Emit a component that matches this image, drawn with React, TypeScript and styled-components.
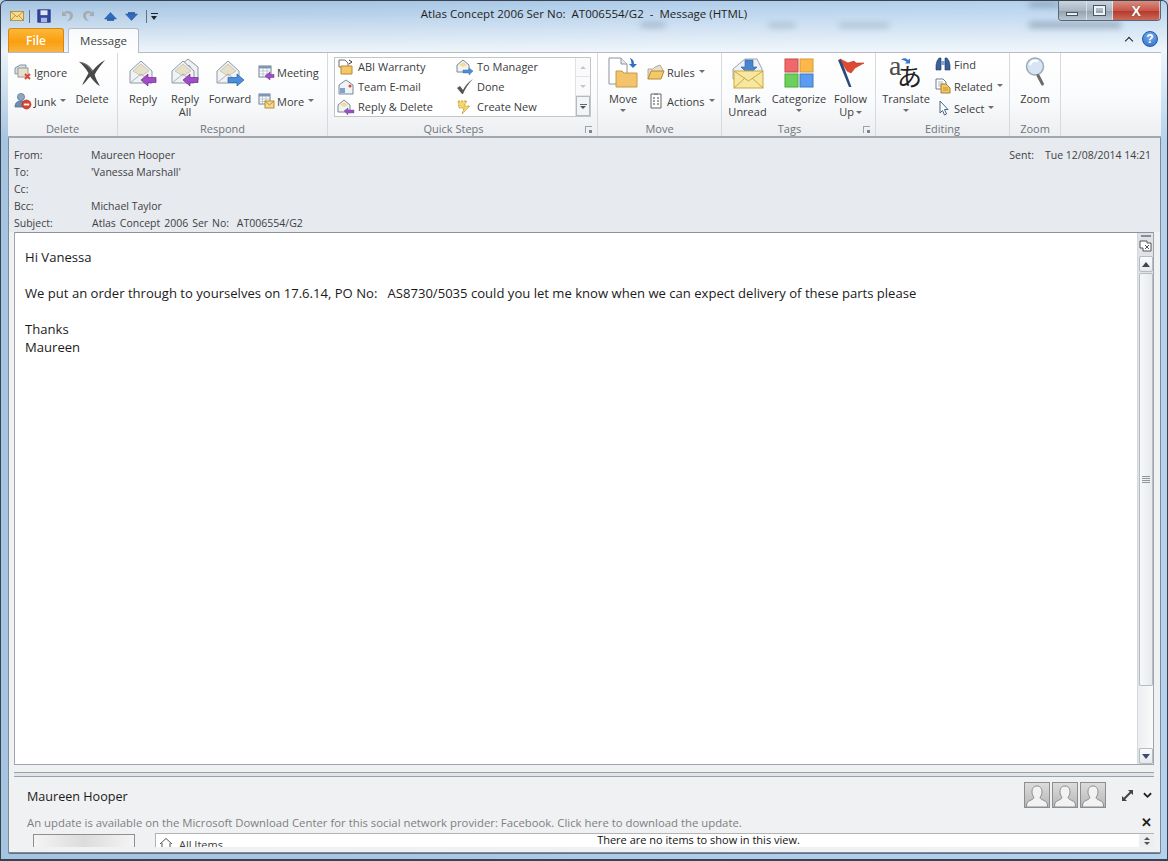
import React from 'react';
import styled, { createGlobalStyle } from 'styled-components';

const GlobalStyle = createGlobalStyle`
  html, body {
    margin: 0;
    padding: 0;
    overflow: hidden;
    background: #b9d1ea;
  }
  * { box-sizing: border-box; }
`;

const FONT = '"Open Sans", "Noto Sans", "Liberation Sans", sans-serif';

/* ---------- icons ---------- */

const EnvelopeBase = () => (
  <>
    <path d="M2 13 L13 3 L24 13 V25 H2 Z" fill="#f0f2f4" stroke="#8c98a6" />
    <path d="M5 13 L13 6 L21 13 L13 18 Z" fill="#e6e0c8" stroke="#b8b49c" strokeWidth="0.6" />
    <path d="M2 25 L13 16 L24 25" fill="none" stroke="#a8b2bc" />
  </>
);

const ReplyIcon = ({ all = false }: { all?: boolean }) => (
  <svg width="30" height="30" viewBox="0 0 30 30">
    {all && <path d="M12 6 L18 1 L28 9 V22 H20 V8 Z" fill="#eef0f3" stroke="#8c98a6" />}
    <EnvelopeBase />
    <path d="M13 22 L20 16 V19.5 H28 V24.5 H20 V28 Z" fill="#a24cc8" stroke="#6d2a91" strokeWidth="0.7" />
  </svg>
);

const ForwardIcon = () => (
  <svg width="30" height="30" viewBox="0 0 30 30">
    <EnvelopeBase />
    <path d="M29 22 L22 16 V19.5 H13 V24.5 H22 V28 Z" fill="#4a8ee0" stroke="#25609f" strokeWidth="0.7" />
  </svg>
);

const DeleteIcon = () => (
  <svg width="30" height="28" viewBox="0 0 32 32">
    <path d="M1 3 C9 4 14 8 17 13 C20 9 25 4 31 1 C26 7 21 13 19 18 C20 22 23 27 25 31 C20 28 16 23 14 20 C11 23 8 27 5 30 C6 26 10 20 12 16 C9 11 5 6 1 3 Z" fill="#484848" />
    <path d="M3 3.5 C9 5 14 10 16 14" fill="none" stroke="#9a9a9a" strokeWidth="0.8" />
  </svg>
);

const IgnoreIcon = () => (
  <svg width="18" height="16" viewBox="0 0 18 16">
    <path d="M1 4 L6 1 L12 1 L12 9 L1 10 Z" fill="#d5dde6" stroke="#8395a8" />
    <rect x="4" y="4" width="10" height="9" fill="#e8e0cf" stroke="#9a9a8a" />
    <path d="M11 10 L16 15 M16 10 L11 15" stroke="#d84a3a" strokeWidth="2" />
  </svg>
);

const JunkIcon = () => (
  <svg width="18" height="18" viewBox="0 0 18 18">
    <circle cx="7" cy="5" r="3.6" fill="#8ca6c4" stroke="#5b7390" strokeWidth="0.7" />
    <path d="M1 15 C1 10 4 9 7 9 C10 9 12 10 12 15 Z" fill="#6f8cb0" stroke="#4d6480" strokeWidth="0.7" />
    <circle cx="12.5" cy="12.5" r="4.5" fill="#d9442e" stroke="#a32e1c" strokeWidth="0.6" />
    <rect x="9.8" y="11.6" width="5.4" height="1.8" fill="#fff" />
  </svg>
);

const MeetingIcon = () => (
  <svg width="17" height="16" viewBox="0 0 17 16">
    <rect x="1" y="2" width="12" height="11" fill="#fff" stroke="#6f7f92" />
    <rect x="1" y="2" width="12" height="2.5" fill="#7f95b5" />
    <path d="M1 7 H13 M1 10 H13 M5 4 V13 M9 4 V13" stroke="#a9b5c4" strokeWidth="0.7" />
    <path d="M7 12 L12 8 V10.5 H16 V13.5 H12 V16 Z" fill="#a24cc8" stroke="#6d2a91" strokeWidth="0.5" />
  </svg>
);

const MoreIcon = () => (
  <svg width="17" height="16" viewBox="0 0 17 16">
    <rect x="1" y="1" width="11" height="10" fill="#fff" stroke="#6f7f92" />
    <rect x="1" y="1" width="11" height="2.5" fill="#7f95b5" />
    <path d="M1 6 H12 M1 8.5 H12 M4.5 3 V11 M8 3 V11" stroke="#a9b5c4" strokeWidth="0.7" />
    <rect x="7" y="8" width="9" height="7" fill="#f6d98a" stroke="#b48f3a" />
    <path d="M7 8 L11.5 12 L16 8" fill="none" stroke="#b48f3a" />
  </svg>
);

const AbiIcon = () => (
  <svg width="18" height="16" viewBox="0 0 18 16">
    <path d="M2 1 H8 L11 4 V8 H2 Z" fill="#fff" stroke="#6c6c6c" />
    <path d="M4 7 H15 V15 H4 Z" fill="#f4c868" stroke="#b68a30" />
    <path d="M12 1 L15 3 L12 5" fill="none" stroke="#333" />
  </svg>
);

const TeamIcon = () => (
  <svg width="18" height="16" viewBox="0 0 18 16">
    <path d="M2 6 L9 1 L16 6 V15 H2 Z" fill="#f0f2f4" stroke="#75889c" />
    <rect x="3" y="9" width="5" height="5" fill="#7fa3cc" />
    <circle cx="13" cy="7" r="1.5" fill="#c94a3a" />
  </svg>
);

const SmallMail = ({ arrow }: { arrow: string }) => (
  <svg width="18" height="16" viewBox="0 0 18 16">
    <path d="M1 6 L7 1 L13 6 V13 H1 Z" fill="#f0f2f4" stroke="#75889c" />
    <path d="M3 6 L7 3 L11 6 L7 8 Z" fill="#f2dc9a" />
    <path d={`M${arrow === '#a24cc8' ? '7 12 L11 9 V11 H17 V14 H11 V16 Z' : '17 12 L13 9 V11 H7 V14 H13 V16 Z'}`} fill={arrow} stroke="#44557a" strokeWidth="0.4" />
  </svg>
);

const CheckIcon = () => (
  <svg width="18" height="16" viewBox="0 0 18 16">
    <path d="M1 9 L4 7 L7 11 C9 7 12 3 17 0 C12 5 9 10 7 15 H6 Z" fill="#555" />
  </svg>
);

const BoltIcon = () => (
  <svg width="18" height="16" viewBox="0 0 18 16">
    <path d="M2 2 H11 L8 7 H14 L6 15 L8 9 H3 Z" fill="#f3d66c" stroke="#b8962c" strokeWidth="0.8" strokeDasharray="2 1" />
  </svg>
);

const MoveIcon = () => (
  <svg width="32" height="32" viewBox="0 0 32 32">
    <path d="M2 1 H14 L20 7 V27 H2 Z" fill="#fff" stroke="#8a94a0" />
    <path d="M14 1 V7 H20" fill="#e6eaee" stroke="#8a94a0" />
    <path d="M9 14 H15 L17 16 H30 V30 H9 Z" fill="#f3c46c" stroke="#c49a48" />
    <path d="M23 1 C26 2 27 4 27 7 H30 L26 11 L22 7 H24.5 C24.5 5 24 3 23 1 Z" fill="#2f6fbe" />
  </svg>
);

const RulesIcon = () => (
  <svg width="18" height="16" viewBox="0 0 18 16">
    <path d="M1 5 H6 L8 3 L13 1 L16 6 V8 H5 L1 15 Z" fill="#e6e0d2" stroke="#8a7c5a" strokeWidth="0.6" />
    <path d="M1 15 L4 7 H17 L14 15 Z" fill="#f3c868" stroke="#b68a30" />
  </svg>
);

const ActionsIcon = () => (
  <svg width="16" height="16" viewBox="0 0 16 16">
    <path d="M3 1 H13 V15 H3 Z" fill="#fff" stroke="#666" />
    <path d="M5 5 H7 M9 5 H11 M5 8 H7 M9 8 H11 M5 11 H7 M9 11 H11" stroke="#444" />
    <path d="M6 0.5 H10 V2 H6 Z" fill="#888" />
  </svg>
);

const MarkUnreadIcon = () => (
  <svg width="34" height="32" viewBox="0 0 34 32">
    <path d="M2 12 L14 2 L26 2 L31 12 V22 H2 Z" fill="#eef0f4" stroke="#99a4b2" />
    <path d="M14 3 H22 V10 H26 L18 18 L10 10 H14 Z" fill="#4a85d0" stroke="#2a5e9f" strokeWidth="0.6" />
    <rect x="3" y="14" width="29" height="17" fill="#f8e7a0" stroke="#c9a840" />
    <path d="M3 14 L17.5 24 L32 14 M3 31 L14 21 M32 31 L21 21" fill="none" stroke="#c9a840" />
  </svg>
);

const CategorizeIcon = () => (
  <svg width="30" height="30" viewBox="0 0 30 30">
    <rect x="1" y="1" width="13" height="13" fill="#f0696a" stroke="#c8494a" />
    <rect x="16" y="1" width="13" height="13" fill="#fcb84a" stroke="#d99a2f" />
    <rect x="1" y="16" width="13" height="13" fill="#6cd05c" stroke="#4aa83c" />
    <rect x="16" y="16" width="13" height="13" fill="#5a9cf0" stroke="#3c78c8" />
  </svg>
);

const FlagIcon = () => (
  <svg width="30" height="32" viewBox="0 0 30 32">
    <path d="M2 3 L13 30 H15.5 L5 2 Z" fill="#2a4a7c" />
    <path d="M4 2 L12 6 L18 4 L20 6 L28 6 L19 11 L15 16 L11 14 Z" fill="#e0492f" stroke="#b23220" strokeWidth="0.6" />
  </svg>
);

const TranslateIcon = () => (
  <svg width="34" height="32" viewBox="0 0 34 32" overflow="visible">
    <text x="0" y="18" fontFamily='"Liberation Serif", serif' fontSize="28" fill="#4b4b4b">a</text>
    <text x="8" y="29" fontFamily='"Noto Sans CJK JP", sans-serif' fontSize="25" fill="#222">あ</text>
    <path d="M12 3 C14 0.5 17 0.5 19 3 L21 1.5 V6.5 H16 L17.5 5 C16 3.5 14.5 3 12 3 Z" fill="#3a78c8" />
  </svg>
);

const FindIcon = () => (
  <svg width="16" height="14" viewBox="0 0 16 14">
    <path d="M2 4 L4 1 H6 V9 L6 13 H1 V8 Z" fill="#3b5f96" stroke="#1e3a66" strokeWidth="0.6" />
    <path d="M14 4 L12 1 H10 V13 H15 V8 Z" fill="#3b5f96" stroke="#1e3a66" strokeWidth="0.6" />
    <rect x="6" y="4" width="4" height="4" fill="#86a3cc" />
  </svg>
);

const RelatedIcon = () => (
  <svg width="16" height="16" viewBox="0 0 16 16">
    <path d="M1 1 H8 L11 4 V11 H1 Z" fill="#fff" stroke="#6f7f92" />
    <path d="M3 4 H8 M3 6 H9 M3 8 H9" stroke="#8a9ab0" strokeWidth="0.7" />
    <path d="M6 6 H11 L15 10 V15 H6 Z" fill="#f3c868" stroke="#a57f2a" />
    <path d="M8 10 H13 M8 12 H13" stroke="#a57f2a" strokeWidth="0.7" />
  </svg>
);

const SelectIcon = () => (
  <svg width="16" height="16" viewBox="0 0 16 16">
    <path d="M5 1 V13 L7.5 10.5 L9.5 15 L11.5 14 L9.5 9.5 H13 Z" fill="#fff" stroke="#4a6384" />
  </svg>
);

const ZoomIcon = () => (
  <svg width="26" height="32" viewBox="0 0 26 32">
    <circle cx="13" cy="9.5" r="8.5" fill="#d7e4f4" stroke="#9aa8b8" strokeWidth="1.5" />
    <path d="M8 8 C9 4.5 12 3 16 4" fill="none" stroke="#fff" strokeWidth="2" />
    <path d="M16 18.5 L20.5 27" stroke="#6b6b6b" strokeWidth="3" strokeLinecap="round" />
  </svg>
);

const PersonIcon = () => (
  <svg width="24" height="24" viewBox="0 0 24 24">
    <path d="M12 3 C8.6 3 7 5.6 7 9 C7 11.5 8 13 9 14.2 C9 16 6 17 3.4 18.4 C2 19.2 1.5 21 1.5 24 H22.5 C22.5 21 22 19.2 20.6 18.4 C18 17 15 16 15 14.2 C16 13 17 11.5 17 9 C17 5.6 15.4 3 12 3 Z" fill="#f2f2f2" stroke="#8d8d8d" />
  </svg>
);

const HouseIcon = () => (
  <svg width="14" height="14" viewBox="0 0 14 14">
    <path d="M1 7 L7 1.5 L13 7 M3 6 V13 H11 V6" fill="none" stroke="#555" />
  </svg>
);

const MailGlyph = () => (
  <svg width="14" height="10" viewBox="0 0 16 12" preserveAspectRatio="none">
    <rect x="0.5" y="0.5" width="15" height="11" fill="#f8dc8a" stroke="#a98c3c" />
    <path d="M0.5 0.5 L8 7 L15.5 0.5 M0.5 11.5 L6 5.5 M15.5 11.5 L10 5.5" fill="none" stroke="#a98c3c" />
  </svg>
);

const SaveGlyph = () => (
  <svg width="14" height="14" viewBox="0 0 16 16">
    <rect x="1" y="1" width="14" height="14" fill="#3346a6" stroke="#1a2a72" />
    <rect x="4" y="1.5" width="8" height="5.5" fill="#dfe6f4" />
    <rect x="4.5" y="10" width="7" height="5" fill="#aab6dc" />
  </svg>
);

const UndoGlyph = ({ flip = false }: { flip?: boolean }) => (
  <svg width="14" height="14" viewBox="0 0 14 14" style={flip ? { transform: 'scaleX(-1)' } : undefined}>
    <path d="M2 2 V7 H7 L5 5 C7 3.5 10 4.5 10 7 C10 9 9 10.5 7 12 C11 12 13 9 13 6.5 C13 2.5 8 0.5 4 3.5 Z" fill="#a7acb2" />
  </svg>
);

const ArrowGlyph = ({ down = false }: { down?: boolean }) => (
  <svg width="13" height="9" viewBox="0 0 13 9">
    <path d={down ? 'M0.5 2 H12.5 L6.5 8.5 Z' : 'M0.5 7 H12.5 L6.5 0.5 Z'} fill="#2e6cc4" stroke="#1c4a8e" strokeWidth="0.5" />
    <path d={down ? 'M3 1 H10' : 'M3 8 H10'} stroke="#1c4a8e" strokeWidth="1.4" />
  </svg>
);

/* ---------- window frame ---------- */

const Window = styled.div`
  position: relative;
  width: 1168px;
  height: 861px;
  overflow: hidden;
  display: flex;
  flex-direction: column;
  font-family: ${FONT};
  color: #3b3b3b;
  border: 1px solid #39424d;
  border-bottom-width: 2px;
  border-radius: 6px 6px 0 0;
  background:
    linear-gradient(180deg, rgba(255,255,255,0) 0, rgba(255,255,255,0.8) 50px, rgba(255,255,255,0) 140px),
    linear-gradient(90deg, #a4c4e2 0, #a6c6e4 30%, #afcdea 60%, #b4d2ee 100%);
`;

const GlassSmudge = styled.span<{ $x: number; $y: number; $w: number; $h: number }>`
  position: absolute;
  left: ${p => p.$x}px;
  top: ${p => p.$y}px;
  width: ${p => p.$w}px;
  height: ${p => p.$h}px;
  background: rgba(70, 90, 115, 0.4);
  filter: blur(3px);
`;

const TitleBar = styled.div`
  position: relative;
  height: 26px;
  padding: 5px 0 0 9px;
  display: flex;
  align-items: flex-start;
  flex: none;
`;

const QuickAccess = styled.div`
  display: flex;
  align-items: center;
  height: 20px;
`;

const QuickSlot = styled.span<{ $after: number }>`
  display: flex;
  align-items: center;
  margin-right: ${p => p.$after}px;
`;

const QuickSeparator = styled.div`
  width: 1px;
  height: 13px;
  background: #5e7388;
`;

const QuickMenu = styled.span`
  width: 7px;
  height: 7px;
  border-top: 1px solid #222;
  position: relative;
  &::after {
    content: '';
    position: absolute;
    left: 0;
    top: 2px;
    border-left: 3.5px solid transparent;
    border-right: 3.5px solid transparent;
    border-top: 4px solid #222;
  }
`;

const Title = styled.div`
  position: absolute;
  left: 0;
  right: 0;
  top: 5px;
  text-align: center;
  font-size: 11.5px;
  line-height: 16px;
  color: #1e1e1e;
  white-space: pre;
`;

const CaptionButtons = styled.div`
  position: absolute;
  top: 0;
  right: 6px;
  height: 20px;
  width: 103px;
  display: flex;
  border: 1px solid #5b6671;
  border-top: none;
  border-radius: 0 0 4px 4px;
  overflow: hidden;
`;

const CaptionButton = styled.div<{ $close?: boolean; $width: number }>`
  width: ${p => p.$width}px;
  display: flex;
  align-items: center;
  justify-content: center;
  border-right: 1px solid rgba(255, 255, 255, 0.5);
  background: ${p =>
    p.$close
      ? 'linear-gradient(180deg, #d98d80 0, #c9564a 50%, #b63b2c 55%, #c96a5c 100%)'
      : 'linear-gradient(180deg, #c8d4e0 0, #a9b6c3 50%, #95a3b1 55%, #b9c6d2 100%)'};
`;

const MinimizeGlyph = styled.span`
  display: block;
  width: 12px;
  height: 4px;
  margin-top: 6px;
  background: #e8edf2;
  border: 1px solid #4a5560;
`;

const MaximizeGlyph = styled.span`
  display: block;
  width: 11px;
  height: 9px;
  border: 2px solid #f0f3f6;
  outline: 1px solid #4a5560;
`;

const CloseGlyph = styled.span`
  color: #fff;
  font-family: "Liberation Sans", sans-serif;
  font-weight: 700;
  font-size: 14px;
  line-height: 14px;
  text-shadow: 0 0 1px #54231c;
`;

const TabRow = styled.div`
  height: 25px;
  flex: none;
  display: flex;
  align-items: flex-end;
  padding: 0 9px 0 7px;
  position: relative;
`;

const FileTab = styled.div`
  width: 56px;
  height: 24px;
  display: flex;
  align-items: center;
  justify-content: center;
  color: #fff;
  font-size: 12px;
  font-weight: 600;
  border: 1px solid #d8860f;
  border-bottom: none;
  border-radius: 3px 3px 0 0;
  background: linear-gradient(180deg, #fdb73a 0, #f99f10 55%, #f7b443 100%);
`;

const MessageTab = styled.div`
  width: 71px;
  height: 25px;
  margin: 0 0 -1px 4px;
  padding-bottom: 2px;
  display: flex;
  align-items: center;
  justify-content: center;
  font-size: 11.5px;
  color: #3f3f3f;
  border: 1px solid #b5bcc4;
  border-bottom: none;
  border-radius: 3px 3px 0 0;
  background: linear-gradient(180deg, #f7f9fb, #fff);
  position: relative;
  z-index: 1;
`;

const HelpArea = styled.div`
  margin-left: auto;
  display: flex;
  align-items: center;
  column-gap: 10px;
  height: 100%;
  padding-bottom: 1px;
`;

const Collapse = styled.span`
  width: 6px;
  height: 6px;
  margin-top: 4px;
  border-left: 1.6px solid #222;
  border-top: 1.6px solid #222;
  transform: rotate(45deg);
`;

const HelpButton = styled.span`
  width: 16px;
  height: 16px;
  border-radius: 50%;
  color: #fff;
  font: 700 12px/15px "Liberation Sans", sans-serif;
  text-align: center;
  background: radial-gradient(circle at 50% 30%, #7cb0ec, #2a6cc6);
  border: 1px solid #2458a8;
`;

const Content = styled.div`
  flex: 1;
  min-height: 0;
  margin: 0 6px 6px 7px;
  display: flex;
  flex-direction: column;
  background: #f0f1f3;
  border: 1px solid #7f8a96;
  border-top: none;
  border-radius: 0 0 2px 2px;
  box-shadow: 0 1px 0 #5d7188;
`;

/* ---------- ribbon ---------- */

const Ribbon = styled.div`
  height: 86px;
  flex: none;
  display: flex;
  border-top: 1px solid #b5bcc4;
  border-bottom: 2px solid #a3a8ae;
  margin: 0 -1px;
  background: linear-gradient(180deg, #ffffff 0, #fafbfc 55%, #eceef1 100%);
`;

const Group = styled.div<{ $width: number }>`
  width: ${p => p.$width}px;
  flex: none;
  display: flex;
  flex-direction: column;
  border-right: 1px solid #d6dadf;
  position: relative;
`;

const GroupBody = styled.div<{ $pad?: number }>`
  flex: 1;
  display: flex;
  padding-left: ${p => p.$pad ?? 0}px;
`;

const GroupLabel = styled.div<{ $launcher?: boolean }>`
  height: 14px;
  flex: none;
  padding-right: ${p => (p.$launcher ? 18 : 0)}px;
  text-align: center;
  font-size: 11px;
  line-height: 14px;
  color: #6f7479;
`;

const DialogLauncher = styled.span`
  position: absolute;
  right: 5px;
  bottom: 3px;
  width: 7px;
  height: 7px;
  border-left: 1px solid #9aa2aa;
  border-top: 1px solid #9aa2aa;
  &::after {
    content: '';
    position: absolute;
    right: 0;
    bottom: 0;
    width: 3px;
    height: 3px;
    background: #7d858d;
  }
`;

const LargeButton = styled.div<{ $width: number }>`
  width: ${p => p.$width}px;
  flex: none;
  display: flex;
  flex-direction: column;
  align-items: center;
  padding-top: 3px;
  font-size: 11px;
  line-height: 13px;
  color: #3b3b3b;
  text-align: center;
  white-space: nowrap;
`;

const LargeIcon = styled.div`
  height: 34px;
  display: flex;
  align-items: center;
  justify-content: center;
  margin-bottom: 2px;
`;

const SmallColumn = styled.div<{ $width: number; $gap: number; $top: number; $left?: number }>`
  width: ${p => p.$width}px;
  flex: none;
  display: flex;
  flex-direction: column;
  row-gap: ${p => p.$gap}px;
  padding-top: ${p => p.$top}px;
  margin-left: ${p => p.$left ?? 0}px;
`;

const SmallButton = styled.div`
  display: flex;
  align-items: center;
  height: 16px;
  column-gap: 2px;
  font-size: 11px;
  color: #3b3b3b;
  white-space: nowrap;
`;

const SmallIcon = styled.div`
  width: 18px;
  height: 16px;
  flex: none;
  display: flex;
  align-items: center;
  justify-content: center;
`;

const Caret = styled.span<{ $block?: boolean }>`
  display: ${p => (p.$block ? 'block' : 'inline-block')};
  margin: ${p => (p.$block ? '4px auto 0' : '0 0 1px 2px')};
  width: 0;
  height: 0;
  vertical-align: middle;
  border-left: 3px solid transparent;
  border-right: 3px solid transparent;
  border-top: 3px solid #6e6e6e;
`;

const Gallery = styled.div`
  width: 257px;
  height: 60px;
  margin: 4px 0 0 6px;
  display: flex;
  border: 1px solid #c2c6cb;
  background: #fff;
`;

const GalleryItems = styled.div`
  flex: 1;
  display: grid;
  grid-template-columns: 119px 120px;
  grid-auto-rows: 20px;
`;

const GalleryItem = styled.div`
  display: flex;
  align-items: center;
  column-gap: 3px;
  padding: 0 0 3px 2px;
  font-size: 11px;
  color: #3b3b3b;
  white-space: nowrap;
`;

const GalleryScroll = styled.div`
  width: 15px;
  flex: none;
  display: flex;
  flex-direction: column;
  border-left: 1px solid #dfe2e5;
`;

const GalleryStep = styled.div<{ $active?: boolean }>`
  flex: 1;
  display: flex;
  flex-direction: column;
  align-items: center;
  justify-content: center;
  row-gap: 1px;
  border-bottom: 1px solid #e2e4e7;
  background: ${p => (p.$active ? '#f3f4f6' : '#fafafa')};
  ${p => p.$active && `
    border: 1px solid #b4b9bf;
    &::before {
      content: '';
      width: 7px;
      height: 1px;
      background: #666;
    }
  `}
`;

const StepArrow = styled.span<{ $up?: boolean; $active?: boolean }>`
  width: 0;
  height: 0;
  border-left: 3px solid transparent;
  border-right: 3px solid transparent;
  ${p => (p.$up ? 'border-bottom' : 'border-top')}: 3px solid ${p => (p.$active ? '#555' : '#c4c8cc')};
`;

/* ---------- message header ---------- */

const Header = styled.div`
  height: 94px;
  flex: none;
  padding: 9px 8px 0 5px;
  position: relative;
  background: #e7eaef;
`;

const HeaderRow = styled.div`
  display: flex;
  height: 17px;
  font-size: 10.5px;
  line-height: 17px;
  color: #3f3f3f;
  white-space: pre;
`;

const HeaderLabel = styled.div`
  width: 77px;
  flex: none;
`;

const HeaderValue = styled.div<{ $wide?: boolean }>`
  word-spacing: ${p => (p.$wide ? 1.2 : 0)}px;
  padding-left: ${p => (p.$wide ? 1 : 0)}px;
`;

const Sent = styled.div`
  position: absolute;
  top: 9px;
  right: 9px;
  display: flex;
  column-gap: 11px;
  font-size: 10.5px;
  line-height: 17px;
  color: #3f3f3f;
`;

/* ---------- message body ---------- */

const BodyWrap = styled.div`
  height: 533px;
  flex: none;
  margin: 0 6px 0 5px;
  display: flex;
  background: #fff;
  border: 1px solid #a0a5ab;
  border-top-color: #8d9399;
`;

const Message = styled.div`
  flex: 1;
  padding: 15px 10px 0 10px;
  font-size: 13.09px;
  line-height: 18px;
  color: #1a1a1a;
  white-space: pre;
`;

const Scrollbar = styled.div`
  width: 16px;
  flex: none;
  display: flex;
  flex-direction: column;
  align-items: center;
  background: #dfe2e7;
  border-left: 1px solid #d4d7db;
`;

const ScrollGrip = styled.div`
  width: 10px;
  height: 2px;
  margin-top: 2px;
  background: #868d94;
  flex: none;
`;

const RulerGlyph = styled.div`
  height: 19px;
  flex: none;
  display: flex;
  align-items: center;
  padding-bottom: 2px;
`;

const ScrollButton = styled.div`
  width: 14px;
  height: 16px;
  flex: none;
  display: flex;
  align-items: center;
  justify-content: center;
  border: 1px solid #b6bcc4;
  border-radius: 2px;
  background: linear-gradient(180deg, #fbfbfc, #e6e8ec);
`;

const ThumbArrow = styled.span<{ $down?: boolean }>`
  width: 0;
  height: 0;
  border-left: 4px solid transparent;
  border-right: 4px solid transparent;
  ${p => (p.$down ? 'border-top' : 'border-bottom')}: 5px solid ${p => (p.$down ? '#3c4a78' : '#3f4650')};
`;

const ScrollThumb = styled.div`
  width: 14px;
  height: 413px;
  flex: none;
  margin-top: 1px;
  display: flex;
  align-items: center;
  justify-content: center;
  border: 1px solid #b6bcc4;
  border-radius: 2px;
  background: linear-gradient(90deg, #f6f7f8, #e8eaee);
`;

const ThumbGrip = styled.span`
  width: 8px;
  height: 7px;
  background: repeating-linear-gradient(180deg, #8f959c 0, #8f959c 1px, transparent 1px, transparent 2px);
`;

const ScrollTrack = styled.div`
  flex: 1;
  align-self: stretch;
  background: linear-gradient(90deg, #eceef1, #fafafa);
`;

/* ---------- people pane ---------- */

const Splitter = styled.div`
  height: 5px;
  flex: none;
  margin: 7px 6px 0 5px;
  background: #e2e5e8;
  border-top: 1px solid #9aa1a8;
  border-bottom: 1px solid #9aa1a8;
`;

const PeopleHead = styled.div`
  height: 35px;
  flex: none;
  display: flex;
  align-items: center;
  padding: 1px 0 0 18px;
  font-size: 12.6px;
  color: #1a1a1a;
`;

const PersonName = styled.span`
  margin-top: 2px;
`;

const Avatars = styled.div`
  margin-left: auto;
  display: flex;
  column-gap: 2px;
  margin-right: 16px;
`;

const Avatar = styled.div`
  width: 26px;
  height: 26px;
  border: 1px solid #8e8e8e;
  background: linear-gradient(180deg, #dcdcdc, #b6b6b6);
  overflow: hidden;
`;

const PaneIcons = styled.div`
  display: flex;
  align-items: center;
  column-gap: 10px;
  margin-right: 8px;
`;

const Notice = styled.div`
  height: 21px;
  flex: none;
  display: flex;
  align-items: center;
  justify-content: space-between;
  padding: 0 8px 0 18px;
  font-size: 11.35px;
  color: #7f7f7f;
`;

const CloseMark = styled.span`
  font: 700 13px/13px "Liberation Sans", sans-serif;
  color: #222;
`;

const ListArea = styled.div`
  flex: 1;
  min-height: 0;
  display: flex;
  align-items: flex-start;
  overflow: hidden;
  padding: 0 6px 0 24px;
`;

const PhotoBox = styled.div`
  width: 102px;
  height: 13px;
  margin-top: 1px;
  flex: none;
  border: 1px solid #8f8f8f;
  border-bottom: none;
  background: linear-gradient(90deg, #f4f4f4, #dcdcdc 50%, #f4f4f4);
`;

const ListBox = styled.div`
  flex: 1;
  height: 14px;
  margin-left: 20px;
  display: flex;
  position: relative;
  overflow: hidden;
  background: #fff;
  border-top: 1px solid #b3b3b3;
  border-left: 1px solid #b3b3b3;
`;

const ListItem = styled.div`
  display: flex;
  align-items: flex-start;
  column-gap: 6px;
  padding: 3px 0 0 3px;
  font-size: 11px;
  line-height: 16px;
  color: #3b3b3b;
`;

const EmptyText = styled.div`
  position: absolute;
  left: 0;
  right: 0;
  top: -1px;
  padding-left: 87px;
  text-align: center;
  font-size: 11px;
  line-height: 14px;
  color: #111;
`;

const ListSpin = styled.div`
  width: 15px;
  margin-left: auto;
  display: flex;
  flex-direction: column;
  align-items: center;
  row-gap: 2px;
  padding-top: 3px;
  background: #eceef0;
`;

const Rows: [string, string][] = [
  ['From:', 'Maureen Hooper'],
  ['To:', "'Vanessa Marshall'"],
  ['Cc:', ''],
  ['Bcc:', 'Michael Taylor'],
  ['Subject:', 'Atlas Concept 2006 Ser No:  AT006554/G2'],
];

const App = () => {
  return (
    <>
      <GlobalStyle />
      <Window>
        <GlassSmudge $x={1028} $y={1} $w={30} $h={5} />
        <GlassSmudge $x={1028} $y={21} $w={92} $h={6} />
        <GlassSmudge $x={768} $y={23} $w={26} $h={3} />
        <GlassSmudge $x={838} $y={23} $w={50} $h={3} />
        <GlassSmudge $x={640} $y={22} $w={24} $h={4} />
        <TitleBar>
          <QuickAccess>
            <QuickSlot $after={5}><MailGlyph /></QuickSlot>
            <QuickSlot $after={7}><QuickSeparator /></QuickSlot>
            <QuickSlot $after={9}><SaveGlyph /></QuickSlot>
            <QuickSlot $after={8}><UndoGlyph /></QuickSlot>
            <QuickSlot $after={8}><UndoGlyph flip /></QuickSlot>
            <QuickSlot $after={8}><ArrowGlyph /></QuickSlot>
            <QuickSlot $after={8}><ArrowGlyph down /></QuickSlot>
            <QuickSlot $after={4}><QuickSeparator /></QuickSlot>
            <QuickMenu />
          </QuickAccess>
          <Title>Atlas Concept 2006 Ser No:  AT006554/G2  -  Message (HTML)</Title>
          <CaptionButtons>
            <CaptionButton $width={28}><MinimizeGlyph /></CaptionButton>
            <CaptionButton $width={27}><MaximizeGlyph /></CaptionButton>
            <CaptionButton $width={47} $close><CloseGlyph>X</CloseGlyph></CaptionButton>
          </CaptionButtons>
        </TitleBar>
        <TabRow>
          <FileTab>File</FileTab>
          <MessageTab>Message</MessageTab>
          <HelpArea>
            <Collapse />
            <HelpButton>?</HelpButton>
          </HelpArea>
        </TabRow>
        <Content>
          <Ribbon>
            <Group $width={110}>
              <GroupBody $pad={6}>
                <SmallColumn $width={60} $gap={13} $top={11}>
                  <SmallButton><SmallIcon><IgnoreIcon /></SmallIcon>Ignore</SmallButton>
                  <SmallButton><SmallIcon><JunkIcon /></SmallIcon>Junk<Caret /></SmallButton>
                </SmallColumn>
                <LargeButton $width={36}>
                  <LargeIcon><DeleteIcon /></LargeIcon>
                  Delete
                </LargeButton>
              </GroupBody>
              <GroupLabel>Delete</GroupLabel>
            </Group>
            <Group $width={210}>
              <GroupBody $pad={4}>
                <LargeButton $width={42}>
                  <LargeIcon><ReplyIcon /></LargeIcon>
                  Reply
                </LargeButton>
                <LargeButton $width={42}>
                  <LargeIcon><ReplyIcon all /></LargeIcon>
                  Reply<br />All
                </LargeButton>
                <LargeButton $width={48}>
                  <LargeIcon><ForwardIcon /></LargeIcon>
                  Forward
                </LargeButton>
                <SmallColumn $width={70} $gap={13} $top={11} $left={3}>
                  <SmallButton><SmallIcon><MeetingIcon /></SmallIcon>Meeting</SmallButton>
                  <SmallButton><SmallIcon><MoreIcon /></SmallIcon>More<Caret /></SmallButton>
                </SmallColumn>
              </GroupBody>
              <GroupLabel>Respond</GroupLabel>
            </Group>
            <Group $width={270}>
              <GroupBody>
                <Gallery>
                  <GalleryItems>
                    <GalleryItem><AbiIcon />ABI Warranty</GalleryItem>
                    <GalleryItem><SmallMail arrow="#4a8ee0" />To Manager</GalleryItem>
                    <GalleryItem><TeamIcon />Team E-mail</GalleryItem>
                    <GalleryItem><CheckIcon />Done</GalleryItem>
                    <GalleryItem><SmallMail arrow="#a24cc8" />Reply &amp; Delete</GalleryItem>
                    <GalleryItem><BoltIcon />Create New</GalleryItem>
                  </GalleryItems>
                  <GalleryScroll>
                    <GalleryStep><StepArrow $up /></GalleryStep>
                    <GalleryStep><StepArrow /></GalleryStep>
                    <GalleryStep $active><StepArrow $active /></GalleryStep>
                  </GalleryScroll>
                </Gallery>
              </GroupBody>
              <GroupLabel $launcher>Quick Steps</GroupLabel>
              <DialogLauncher />
            </Group>
            <Group $width={124}>
              <GroupBody $pad={6}>
                <LargeButton $width={38}>
                  <LargeIcon><MoveIcon /></LargeIcon>
                  Move
                  <Caret $block />
                </LargeButton>
                <SmallColumn $width={74} $gap={13} $top={11} $left={5}>
                  <SmallButton><SmallIcon><RulesIcon /></SmallIcon>Rules<Caret /></SmallButton>
                  <SmallButton><SmallIcon><ActionsIcon /></SmallIcon>Actions<Caret /></SmallButton>
                </SmallColumn>
              </GroupBody>
              <GroupLabel>Move</GroupLabel>
            </Group>
            <Group $width={154}>
              <GroupBody $pad={3}>
                <LargeButton $width={45}>
                  <LargeIcon><MarkUnreadIcon /></LargeIcon>
                  Mark<br />Unread
                </LargeButton>
                <LargeButton $width={58}>
                  <LargeIcon><CategorizeIcon /></LargeIcon>
                  Categorize
                  <Caret $block />
                </LargeButton>
                <LargeButton $width={45}>
                  <LargeIcon><FlagIcon /></LargeIcon>
                  Follow<br />
                  <span>Up<Caret /></span>
                </LargeButton>
              </GroupBody>
              <GroupLabel $launcher>Tags</GroupLabel>
              <DialogLauncher />
            </Group>
            <Group $width={134}>
              <GroupBody $pad={4}>
                <LargeButton $width={52}>
                  <LargeIcon><TranslateIcon /></LargeIcon>
                  Translate
                  <Caret $block />
                </LargeButton>
                <SmallColumn $width={74} $gap={6} $top={3} $left={2}>
                  <SmallButton><SmallIcon><FindIcon /></SmallIcon>Find</SmallButton>
                  <SmallButton><SmallIcon><RelatedIcon /></SmallIcon>Related<Caret /></SmallButton>
                  <SmallButton><SmallIcon><SelectIcon /></SmallIcon>Select<Caret /></SmallButton>
                </SmallColumn>
              </GroupBody>
              <GroupLabel>Editing</GroupLabel>
            </Group>
            <Group $width={51}>
              <GroupBody>
                <LargeButton $width={50}>
                  <LargeIcon><ZoomIcon /></LargeIcon>
                  Zoom
                </LargeButton>
              </GroupBody>
              <GroupLabel>Zoom</GroupLabel>
            </Group>
          </Ribbon>
          <Header>
            {Rows.map(([label, value]) => (
              <HeaderRow key={label}>
                <HeaderLabel>{label}</HeaderLabel>
                <HeaderValue $wide={label === 'Subject:'}>{value}</HeaderValue>
              </HeaderRow>
            ))}
            <Sent>
              <span>Sent:</span>
              <span>Tue 12/08/2014 14:21</span>
            </Sent>
          </Header>
          <BodyWrap>
            <Message>
              {`Hi Vanessa

We put an order through to yourselves on 17.6.14, PO No:   AS8730/5035 could you let me know when we can expect delivery of these parts please

Thanks
Maureen`}
            </Message>
            <Scrollbar>
              <ScrollGrip />
              <RulerGlyph>
                <svg width="13" height="12" viewBox="0 0 13 12">
                  <path d="M1 1 H8 V3 H12 V11 H4 V8 H1 Z" fill="#fff" stroke="#555" />
                  <path d="M6 5 L10 9 M10 5 L6 9" stroke="#555" />
                </svg>
              </RulerGlyph>
              <ScrollButton><ThumbArrow /></ScrollButton>
              <ScrollThumb><ThumbGrip /></ScrollThumb>
              <ScrollTrack />
              <ScrollButton><ThumbArrow $down /></ScrollButton>
            </Scrollbar>
          </BodyWrap>
          <Splitter />
          <PeopleHead>
            <PersonName>Maureen Hooper</PersonName>
            <Avatars>
              <Avatar><PersonIcon /></Avatar>
              <Avatar><PersonIcon /></Avatar>
              <Avatar><PersonIcon /></Avatar>
            </Avatars>
            <PaneIcons>
              <svg width="11" height="11" viewBox="0 0 12 12">
                <path d="M6.5 0 H12 V5.5 L10 3.5 L3.5 10 L5.5 12 H0 V6.5 L2 8.5 L8.5 2 Z" fill="#444" />
              </svg>
              <svg width="9" height="7" viewBox="0 0 10 7">
                <path d="M1 1 L5 5 L9 1" fill="none" stroke="#222" strokeWidth="2" />
              </svg>
            </PaneIcons>
          </PeopleHead>
          <Notice>
            An update is available on the Microsoft Download Center for this social network provider: Facebook. Click here to download the update.
            <CloseMark>✕</CloseMark>
          </Notice>
          <ListArea>
            <PhotoBox />
            <ListBox>
              <ListItem><HouseIcon />All Items</ListItem>
              <EmptyText>There are no items to show in this view.</EmptyText>
              <ListSpin>
                <StepArrow $up $active />
                <StepArrow $active />
              </ListSpin>
            </ListBox>
          </ListArea>
        </Content>
      </Window>
    </>
  );
};

export default App;
